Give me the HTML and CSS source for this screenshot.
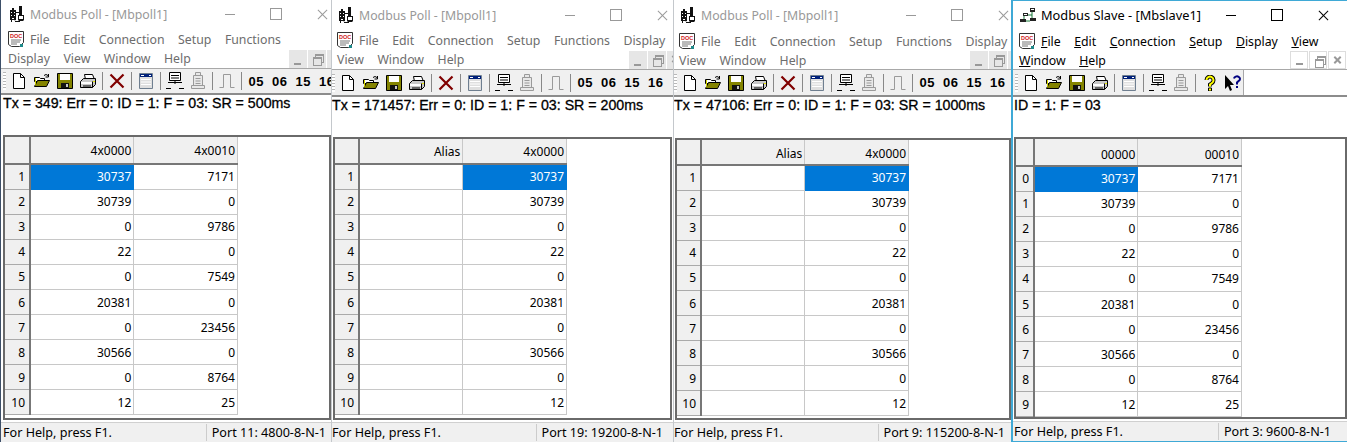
FILE: index.html
```html
<!DOCTYPE html>
<html lang="en">
<head>
  <meta charset="UTF-8">
  <title>Modbus Poll and Slave</title>
  <link rel="stylesheet" href="styles.css">
</head>
<body>
  <svg class="defs" width="0" height="0">
    <symbol id="i-app" viewBox="0 0 16 16">
      <path d="M1 4h6v10h-6z" fill="#111"/>
      <path d="M2 6h1v1h-1zM5 6h1v1h-1zM2 9h1v1h-1zM5 9h1v1h-1zM3 12h2v1h-2z" fill="#fff"/>
      <path d="M3 2h2v2h-2zM2 14h1v2h-1zM5 14h1v2h5v-1h-4" fill="#111"/>
      <path d="M10 0h3v9h-3zM9 9h6v5l-1 1h-4l-1-1z" fill="#111"/>
      <path d="M10 10h4v3h-4z" fill="#fff"/>
      <path d="M7 6h3v1h-3z" fill="#111"/>
    </symbol>
    <symbol id="i-slave" viewBox="0 0 16 16">
      <path d="M10 1h5v4h-5zM3 6h5v3h-5zM0 12h6v3h-6zM10 11h6v3h-6z" fill="#222"/>
      <path d="M12 5v6M8 8h4M4 9v3M6 14h4" stroke="#1a7a3a" fill="none"/>
      <path d="M11 2h3v1h-3zM4 7h3v1h-3z" fill="#fff"/>
    </symbol>
    <symbol id="i-doc" viewBox="0 0 16 16">
      <path d="M.5 .5h15v11l-4 4h-8l-3-2z" fill="#fff" stroke="#333"/>
      <text x="2" y="6.500" class="doc-label">DOC</text>
      <path d="M3 9h10M3 11h9M3 13h6" stroke="#777"/>
      <path d="M12 13h3v3h-3z" fill="#1f8a8a"/>
    </symbol>
    <symbol id="i-new" viewBox="0 0 16 16">
      <path d="M2.500 .5h7l4 4v11h-11z" fill="#fff" stroke="#000"/>
      <path d="M9.500 .5v4h4" fill="none" stroke="#000"/>
    </symbol>
    <symbol id="i-open" viewBox="0 0 16 16">
      <path d="M.5 4.500h5l1 1h4v3h-10z" fill="#fff" stroke="#000"/>
      <path d="M.5 13.500l3-6h12l-3 6z" fill="#848400" stroke="#000"/>
      <path d="M1 13v-8h1v6z" fill="#d8d800"/>
      <path d="M10 2.500q2-2 4 0M14.500 1v3h-3" fill="none" stroke="#000"/>
    </symbol>
    <symbol id="i-save" viewBox="0 0 16 16">
      <path d="M.5 .5h15v15h-15z" fill="#848400" stroke="#000"/>
      <path d="M3 1h10v6h-10z" fill="#fff"/>
      <path d="M4 10h8v5h-8z" fill="#111"/>
      <path d="M9 11h2v3h-2z" fill="#c8c8c8"/>
    </symbol>
    <symbol id="i-print" viewBox="0 0 16 16">
      <path d="M4.500 1.500h8l2 5h-9z" fill="#fff" stroke="#000"/>
      <path d="M.5 8.500l3-3h12v6l-3 3h-12z" fill="#c8c8c8" stroke="#000"/>
      <path d="M1 9h11v2h-11z" fill="#fff"/>
      <path d="M12.500 8.500v6M3 13h8" stroke="#000" fill="none"/>
      <path d="M13 8h2v1h-2z" fill="#e8e800"/>
    </symbol>
    <symbol id="i-del" viewBox="0 0 16 16">
      <path d="M1.500 1.500l13 13M14.500 1.500l-13 13" stroke="#800000" stroke-width="2.200" fill="none"/>
    </symbol>
    <symbol id="i-win" viewBox="0 0 16 16">
      <path d="M1.500 .5h13v15h-13z" fill="#dfdfdf" stroke="#6f7f90"/>
      <path d="M2 1h12v3h-12z" fill="#00207a"/>
      <path d="M3 2h3v1h-3zM11 2h2v1h-2z" fill="#fff"/>
      <path d="M3 6.500h10M3 9h10M3 11.500h10" stroke="#fff"/>
    </symbol>
    <symbol id="i-conn" viewBox="0 0 18 18">
      <path d="M3.500 .5h11v8h-11z" fill="#fff" stroke="#000"/>
      <path d="M5 3.500h8M5 6h8" stroke="#000"/>
      <path d="M2 10.500h14M9 9v3M0 16.500h5M13 16.500h5" stroke="#000" fill="none"/>
    </symbol>
    <symbol id="i-disc" viewBox="0 0 18 18">
      <path d="M6.500 .5h5v3h-5zM4.500 3.500h9v10h-9zM2.500 13.500h13v3h-13z" fill="#e8e8e8" stroke="#9a9a9a"/>
      <path d="M6.500 6.500h5M6.500 9h5M6.500 11.500h5" stroke="#9a9a9a"/>
    </symbol>
    <symbol id="i-pulse" viewBox="0 0 16 16">
      <path d="M.5 14.500h4v-13h7v13h4" fill="none" stroke="#9a9a9a"/>
    </symbol>
    <symbol id="i-help" viewBox="0 0 16 16">
      <path d="M4.500 5a3.500 3.500 0 1 1 5.500 3l-2 1.500v2" fill="none" stroke="#000" stroke-width="4"/>
      <path d="M4.500 5a3.500 3.500 0 1 1 5.500 3l-2 1.500v2" fill="none" stroke="#ffff00" stroke-width="2"/>
      <path d="M6.500 13h3v3h-3z" fill="#ffff00" stroke="#000"/>
    </symbol>
    <symbol id="i-what" viewBox="0 0 16 16">
      <path d="M0 0v14l3-3 2 5 2-1-2-5h4z" fill="#000"/>
      <path d="M9 3.500a3 2.500 0 1 1 4.500 2.500l-1.500 1.500v2" fill="none" stroke="#000080" stroke-width="2"/>
      <path d="M11 11h2v2h-2z" fill="#000080"/>
    </symbol>
  </svg>

  <main class="desktop">

    <section class="window win-a inactive">
      <header class="titlebar">
        <svg class="app-icon"><use href="#i-app"/></svg>
        <span class="title">Modbus Poll - [Mbpoll1]</span>
        <div class="caption">
          <span class="cap-min"></span><span class="cap-max"></span><span class="cap-close"></span>
        </div>
      </header>
      <nav class="menubar">
        <div class="menu-row">
          <svg class="doc-icon"><use href="#i-doc"/></svg>
          <span>File</span><span>Edit</span><span>Connection</span><span>Setup</span><span>Functions</span>
        </div>
        <div class="menu-row second">
          <span>Display</span><span>View</span><span>Window</span><span>Help</span>
          <div class="mdi-buttons"><b class="mdi-min"></b><b class="mdi-restore"></b><b class="mdi-close"></b></div>
        </div>
      </nav>
      <div class="toolbar">
        <i class="grip"></i>
        <svg class="tb"><use href="#i-new"/></svg>
        <svg class="tb"><use href="#i-open"/></svg>
        <svg class="tb"><use href="#i-save"/></svg>
        <svg class="tb"><use href="#i-print"/></svg>
        <i class="sep"></i>
        <svg class="tb"><use href="#i-del"/></svg>
        <i class="sep"></i>
        <svg class="tb"><use href="#i-win"/></svg>
        <i class="sep"></i>
        <svg class="tb wide"><use href="#i-conn"/></svg>
        <svg class="tb wide"><use href="#i-disc"/></svg>
        <i class="sep"></i>
        <svg class="tb"><use href="#i-pulse"/></svg>
        <i class="sep"></i>
        <span class="fn-codes"><span>05</span><span>06</span><span>15</span><span>16</span></span>
      </div>
      <div class="status-line">Tx = 349: Err = 0: ID = 1: F = 03: SR = 500ms</div>
      <div class="grid-frame">
        <table class="grid">
          <tr><th class="corner"></th><th>4x0000</th><th>4x0010</th></tr>
          <tr><th>1</th><td class="selected">30737</td><td>7171</td></tr>
          <tr><th>2</th><td>30739</td><td>0</td></tr>
          <tr><th>3</th><td>0</td><td>9786</td></tr>
          <tr><th>4</th><td>22</td><td>0</td></tr>
          <tr><th>5</th><td>0</td><td>7549</td></tr>
          <tr><th>6</th><td>20381</td><td>0</td></tr>
          <tr><th>7</th><td>0</td><td>23456</td></tr>
          <tr><th>8</th><td>30566</td><td>0</td></tr>
          <tr><th>9</th><td>0</td><td>8764</td></tr>
          <tr><th>10</th><td>12</td><td>25</td></tr>
        </table>
      </div>
      <footer class="statusbar"><span>For Help, press F1.</span><span class="port">Port 11: 4800-8-N-1</span></footer>
    </section>

    <section class="window win-b inactive">
      <header class="titlebar">
        <svg class="app-icon"><use href="#i-app"/></svg>
        <span class="title">Modbus Poll - [Mbpoll1]</span>
        <div class="caption">
          <span class="cap-min"></span><span class="cap-max"></span><span class="cap-close"></span>
        </div>
      </header>
      <nav class="menubar">
        <div class="menu-row">
          <svg class="doc-icon"><use href="#i-doc"/></svg>
          <span>File</span><span>Edit</span><span>Connection</span><span>Setup</span><span>Functions</span><span>Display</span>
        </div>
        <div class="menu-row second">
          <span>View</span><span>Window</span><span>Help</span>
          <div class="mdi-buttons"><b class="mdi-min"></b><b class="mdi-restore"></b><b class="mdi-close"></b></div>
        </div>
      </nav>
      <div class="toolbar">
        <i class="grip"></i>
        <svg class="tb"><use href="#i-new"/></svg>
        <svg class="tb"><use href="#i-open"/></svg>
        <svg class="tb"><use href="#i-save"/></svg>
        <svg class="tb"><use href="#i-print"/></svg>
        <i class="sep"></i>
        <svg class="tb"><use href="#i-del"/></svg>
        <i class="sep"></i>
        <svg class="tb"><use href="#i-win"/></svg>
        <i class="sep"></i>
        <svg class="tb wide"><use href="#i-conn"/></svg>
        <svg class="tb wide"><use href="#i-disc"/></svg>
        <i class="sep"></i>
        <svg class="tb"><use href="#i-pulse"/></svg>
        <i class="sep"></i>
        <span class="fn-codes"><span>05</span><span>06</span><span>15</span><span>16</span></span>
      </div>
      <div class="status-line">Tx = 171457: Err = 0: ID = 1: F = 03: SR = 200ms</div>
      <div class="grid-frame">
        <table class="grid">
          <tr><th class="corner"></th><th>Alias</th><th>4x0000</th></tr>
          <tr><th>1</th><td></td><td class="selected">30737</td></tr>
          <tr><th>2</th><td></td><td>30739</td></tr>
          <tr><th>3</th><td></td><td>0</td></tr>
          <tr><th>4</th><td></td><td>22</td></tr>
          <tr><th>5</th><td></td><td>0</td></tr>
          <tr><th>6</th><td></td><td>20381</td></tr>
          <tr><th>7</th><td></td><td>0</td></tr>
          <tr><th>8</th><td></td><td>30566</td></tr>
          <tr><th>9</th><td></td><td>0</td></tr>
          <tr><th>10</th><td></td><td>12</td></tr>
        </table>
      </div>
      <footer class="statusbar"><span>For Help, press F1.</span><span class="port">Port 19: 19200-8-N-1</span></footer>
    </section>

    <section class="window win-c inactive">
      <header class="titlebar">
        <svg class="app-icon"><use href="#i-app"/></svg>
        <span class="title">Modbus Poll - [Mbpoll1]</span>
        <div class="caption">
          <span class="cap-min"></span><span class="cap-max"></span><span class="cap-close"></span>
        </div>
      </header>
      <nav class="menubar">
        <div class="menu-row">
          <svg class="doc-icon"><use href="#i-doc"/></svg>
          <span>File</span><span>Edit</span><span>Connection</span><span>Setup</span><span>Functions</span><span>Display</span>
        </div>
        <div class="menu-row second">
          <span>View</span><span>Window</span><span>Help</span>
          <div class="mdi-buttons"><b class="mdi-min"></b><b class="mdi-restore"></b><b class="mdi-close"></b></div>
        </div>
      </nav>
      <div class="toolbar">
        <i class="grip"></i>
        <svg class="tb"><use href="#i-new"/></svg>
        <svg class="tb"><use href="#i-open"/></svg>
        <svg class="tb"><use href="#i-save"/></svg>
        <svg class="tb"><use href="#i-print"/></svg>
        <i class="sep"></i>
        <svg class="tb"><use href="#i-del"/></svg>
        <i class="sep"></i>
        <svg class="tb"><use href="#i-win"/></svg>
        <i class="sep"></i>
        <svg class="tb wide"><use href="#i-conn"/></svg>
        <svg class="tb wide"><use href="#i-disc"/></svg>
        <i class="sep"></i>
        <svg class="tb"><use href="#i-pulse"/></svg>
        <i class="sep"></i>
        <span class="fn-codes"><span>05</span><span>06</span><span>15</span><span>16</span></span>
      </div>
      <div class="status-line">Tx = 47106: Err = 0: ID = 1: F = 03: SR = 1000ms</div>
      <div class="grid-frame">
        <table class="grid">
          <tr><th class="corner"></th><th>Alias</th><th>4x0000</th></tr>
          <tr><th>1</th><td></td><td class="selected">30737</td></tr>
          <tr><th>2</th><td></td><td>30739</td></tr>
          <tr><th>3</th><td></td><td>0</td></tr>
          <tr><th>4</th><td></td><td>22</td></tr>
          <tr><th>5</th><td></td><td>0</td></tr>
          <tr><th>6</th><td></td><td>20381</td></tr>
          <tr><th>7</th><td></td><td>0</td></tr>
          <tr><th>8</th><td></td><td>30566</td></tr>
          <tr><th>9</th><td></td><td>0</td></tr>
          <tr><th>10</th><td></td><td>12</td></tr>
        </table>
      </div>
      <footer class="statusbar"><span>For Help, press F1.</span><span class="port">Port 9: 115200-8-N-1</span></footer>
    </section>

    <section class="window win-d">
      <header class="titlebar">
        <svg class="app-icon"><use href="#i-slave"/></svg>
        <span class="title">Modbus Slave - [Mbslave1]</span>
        <div class="caption">
          <span class="cap-min"></span><span class="cap-max"></span><span class="cap-close"></span>
        </div>
      </header>
      <nav class="menubar">
        <div class="menu-row">
          <svg class="doc-icon"><use href="#i-doc"/></svg>
          <span><u>F</u>ile</span><span><u>E</u>dit</span><span><u>C</u>onnection</span><span><u>S</u>etup</span><span><u>D</u>isplay</span><span><u>V</u>iew</span>
        </div>
        <div class="menu-row second">
          <span><u>W</u>indow</span><span><u>H</u>elp</span>
          <div class="mdi-buttons"><b class="mdi-min"></b><b class="mdi-restore"></b><b class="mdi-close"></b></div>
        </div>
      </nav>
      <div class="toolbar">
        <i class="grip"></i>
        <svg class="tb"><use href="#i-new"/></svg>
        <svg class="tb"><use href="#i-open"/></svg>
        <svg class="tb"><use href="#i-save"/></svg>
        <svg class="tb"><use href="#i-print"/></svg>
        <i class="sep"></i>
        <svg class="tb"><use href="#i-win"/></svg>
        <i class="sep"></i>
        <svg class="tb wide"><use href="#i-conn"/></svg>
        <svg class="tb wide"><use href="#i-disc"/></svg>
        <i class="sep"></i>
        <svg class="tb"><use href="#i-help"/></svg>
        <svg class="tb"><use href="#i-what"/></svg>
      </div>
      <div class="status-line">ID = 1: F = 03</div>
      <div class="grid-frame">
        <table class="grid">
          <tr><th class="corner"></th><th>00000</th><th>00010</th></tr>
          <tr><th>0</th><td class="selected">30737</td><td>7171</td></tr>
          <tr><th>1</th><td>30739</td><td>0</td></tr>
          <tr><th>2</th><td>0</td><td>9786</td></tr>
          <tr><th>3</th><td>22</td><td>0</td></tr>
          <tr><th>4</th><td>0</td><td>7549</td></tr>
          <tr><th>5</th><td>20381</td><td>0</td></tr>
          <tr><th>6</th><td>0</td><td>23456</td></tr>
          <tr><th>7</th><td>30566</td><td>0</td></tr>
          <tr><th>8</th><td>0</td><td>8764</td></tr>
          <tr><th>9</th><td>12</td><td>25</td></tr>
        </table>
      </div>
      <footer class="statusbar"><span>For Help, press F1.</span><span class="port">Port 3: 9600-8-N-1</span></footer>
    </section>

  </main>
</body>
</html>
```

FILE: styles.css
```css
* {
  box-sizing: border-box;
}

html, body {
  margin: 0;
  height: 100%;
  overflow: hidden;
}

body {
  background: #fff;
  font-family: "Noto Sans", "Open Sans", sans-serif;
  font-size: 12px;
  color: #000;
}

.defs {
  display: block;
  height: 0;
}

.doc-label {
  font-family: "Liberation Sans", Arial, sans-serif;
  font-size: 5.500px;
  font-weight: 700;
  fill: #d01818;
}

.desktop {
  display: flex;
  height: 442px;
  width: 1347px;
}

/* the four windows sit a pixel or two apart, hence the numbers per window */
.window {
  display: flex;
  flex-direction: column;
  height: 442px;
  flex: none;
  background: #fff;
  border-left: 1px solid #c4c8cc;
  overflow: hidden;
}

.win-a {
  width: 331px;
  border-left-color: #3d4f68;
  --title-pad: 8px;
  --cap-right: -14px;
  --menu-top: 1px;
  --menu-pad: 7px;
  --row2: 19px;
  --tb-h: 24px;
  --tb-pad: 2px;
  --tx-h: 42px;
  --tx-pad: 2px;
  --grid-left: 2px;
  --grid-right: 0;
  --head: 27px;
  --head-pad: 0;
  --rowhead: 25px;
  --port-right: 5px;
}

.win-b {
  width: 342px;
  padding-top: 1px;
  --title-pad: 6px;
  --cap-right: -12px;
  --menu-top: 1px;
  --menu-pad: 5px;
  --row2: 19px;
  --tb-h: 25px;
  --tb-pad: 0;
  --tx-h: 42px;
  --tx-pad: 0;
  --grid-left: 1px;
  --grid-right: 1px;
  --head: 25px;
  --head-pad: 0;
  --rowhead: 24px;
  --port-right: 10px;
}

.win-c {
  width: 338px;
  padding-top: 1px;
  --title-pad: 6px;
  --cap-right: -15px;
  --menu-top: 2px;
  --menu-pad: 5px;
  --row2: 18px;
  --tb-h: 25px;
  --tb-pad: 0;
  --tx-h: 43px;
  --tx-pad: 0;
  --grid-left: 1px;
  --grid-right: 0;
  --head: 25px;
  --head-pad: 2px;
  --rowhead: 24px;
  --port-right: 6px;
}

.win-d {
  width: 336px;
  border: 0 solid #3fa9d6;
  border-width: 1px 0 1px 2px;
  --title-pad: 7px;
  --cap-right: 1px;
  --menu-top: 2px;
  --menu-pad: 6px;
  --row2: 18px;
  --tb-h: 25px;
  --tb-pad: 2px;
  --tx-h: 42px;
  --tx-pad: 1px;
  --grid-left: 1px;
  --grid-right: 0;
  --head: 27px;
  --head-pad: 4px;
  --rowhead: 18px;
  --port-right: 16px;
}

/* title bar */
.titlebar {
  display: flex;
  align-items: center;
  height: 28px;
  flex: none;
  padding-left: var(--title-pad);
  font-size: 12.300px;
}

.win-d .titlebar {
  font-size: 12.800px;
}

.inactive .titlebar {
  color: #999;
}

.app-icon {
  width: 16px;
  height: 16px;
  margin-right: 5px;
  flex: none;
}

.caption {
  display: flex;
  margin-left: auto;
  margin-right: var(--cap-right);
  height: 28px;
  flex: none;
}

.caption span {
  display: flex;
  align-items: center;
  justify-content: center;
  width: 46px;
  position: relative;
}

.cap-min::before {
  content: "";
  width: 10px;
  border-top: 1px solid currentColor;
}

.cap-max::before {
  content: "";
  width: 10px;
  height: 10px;
  border: 1px solid currentColor;
}

.cap-close::before,
.cap-close::after {
  content: "";
  position: absolute;
  width: 13px;
  border-top: 1px solid currentColor;
  transform: rotate(45deg);
}

.cap-close::after {
  transform: rotate(-45deg);
}

/* menus */
.menubar {
  flex: none;
  padding-top: var(--menu-top);
  font-size: 12.300px;
  border-bottom: 1px solid #a8a8a8;
}

.inactive .menubar {
  color: #6d6d6d;
}

.menu-row {
  display: flex;
  align-items: center;
  gap: 13.500px;
  height: 20px;
  padding-left: var(--menu-pad);
  white-space: nowrap;
}

.menu-row .doc-icon {
  width: 16px;
  height: 16px;
  margin-right: -7.500px;
  flex: none;
}

.menu-row.second {
  height: var(--row2);
}

.mdi-buttons {
  display: flex;
  gap: 1px;
  margin-left: auto;
  margin-right: var(--cap-right);
  flex: none;
}

.mdi-buttons b {
  display: block;
  width: 18px;
  height: 18px;
  background: #e6e6e6;
  position: relative;
}

.win-d .mdi-buttons {
  margin-right: 1px;
}

.win-d .mdi-buttons b {
  background: #fff;
  border: 1px solid #ddd;
}

.mdi-min::before {
  content: "";
  position: absolute;
  left: 5px;
  bottom: 3px;
  width: 7px;
  height: 2px;
  background: #999;
}

.mdi-restore::before,
.mdi-restore::after {
  content: "";
  position: absolute;
  width: 7px;
  height: 6px;
  border: 1px solid #999;
  border-top-width: 2px;
}

.mdi-restore::before {
  left: 7px;
  top: 4px;
}

.mdi-restore::after {
  left: 5px;
  top: 7px;
  background: #e6e6e6;
}

.win-d .mdi-restore::after {
  background: #fff;
}

.mdi-close::before,
.mdi-close::after {
  content: "";
  position: absolute;
  left: 4px;
  top: 7px;
  width: 9px;
  height: 2px;
  background: #999;
  transform: rotate(45deg);
}

.mdi-close::after {
  transform: rotate(-45deg);
}

/* toolbar */
.toolbar {
  display: flex;
  align-items: center;
  height: var(--tb-h);
  flex: none;
  background: #f0f0f0;
  padding-left: var(--tb-pad);
  overflow: hidden;
}

.win-d .toolbar {
  width: 231px;
  border-right: 1px solid #a8a8a8;
}

.grip {
  width: 3px;
  height: 18px;
  margin-right: 1.500px;
  background: repeating-linear-gradient(#b8b8b8 0 1px, #fff 1px 3px);
  flex: none;
}

.tb {
  width: 16px;
  height: 16px;
  margin: 0 3.500px;
  flex: none;
}

.tb.wide {
  width: 18px;
  height: 18px;
  margin: 0 2.500px;
}

.sep {
  width: 1px;
  height: 18px;
  margin: 0 2.500px;
  background: #888;
  flex: none;
}

.fn-codes {
  display: flex;
  gap: 8px;
  margin-left: 4px;
  font-family: "Liberation Sans", Arial, sans-serif;
  font-weight: 700;
  font-size: 13px;
  letter-spacing: .5px;
  white-space: nowrap;
}

/* tx text under the toolbar */
.status-line {
  height: var(--tx-h);
  flex: none;
  padding: 0 0 0 var(--tx-pad);
  font-family: "Liberation Sans", Arial, sans-serif;
  font-size: 14.200px;
  line-height: 16px;
  -webkit-text-stroke: .3px #000;
  border-top: 2px solid #8c8c8c;
  white-space: nowrap;
}

/* data grid */
.grid-frame {
  flex: 1;
  min-height: 0;
  margin: 0 var(--grid-right) 0 var(--grid-left);
  border: 2px solid #6a6a6a;
  background: #fff;
  overflow: hidden;
}

.grid {
  border-collapse: collapse;
  table-layout: fixed;
  width: calc(var(--rowhead) + 208px);
  font-size: 12px;
}

.grid tr {
  height: 25.100px;
}

.grid tr:first-child {
  height: var(--head);
}

.grid th,
.grid td {
  padding: 0 2px 0 0;
  text-align: right;
  font-weight: 400;
  border: 1px solid #c8c8c8;
  overflow: hidden;
  white-space: nowrap;
}

.grid th:first-child {
  width: var(--rowhead);
  background: #f0f0f0;
  padding: 0 4px 0 0;
  border: 0;
  border-right: 2px solid #777;
  border-bottom: 1px solid #aaa;
}

.grid tr:first-child th {
  background: #f0f0f0;
  padding-top: var(--head-pad);
  border-top: 0;
  border-bottom: 2px solid #777;
}

.grid .selected {
  background: #0078d7;
  color: #fff;
  border-color: #0078d7;
}

/* bottom status bar */
.statusbar {
  display: flex;
  justify-content: space-between;
  align-items: center;
  height: 20px;
  margin-top: 2px;
  flex: none;
  background: #f0f0f0;
  border-top: 1px solid #d0d0d0;
  padding: 0 var(--port-right) 0 var(--tx-pad);
  font-size: 12.600px;
  white-space: nowrap;
}

.port {
  border-left: 1px solid #ccc;
  padding-left: 5px;
}
```
